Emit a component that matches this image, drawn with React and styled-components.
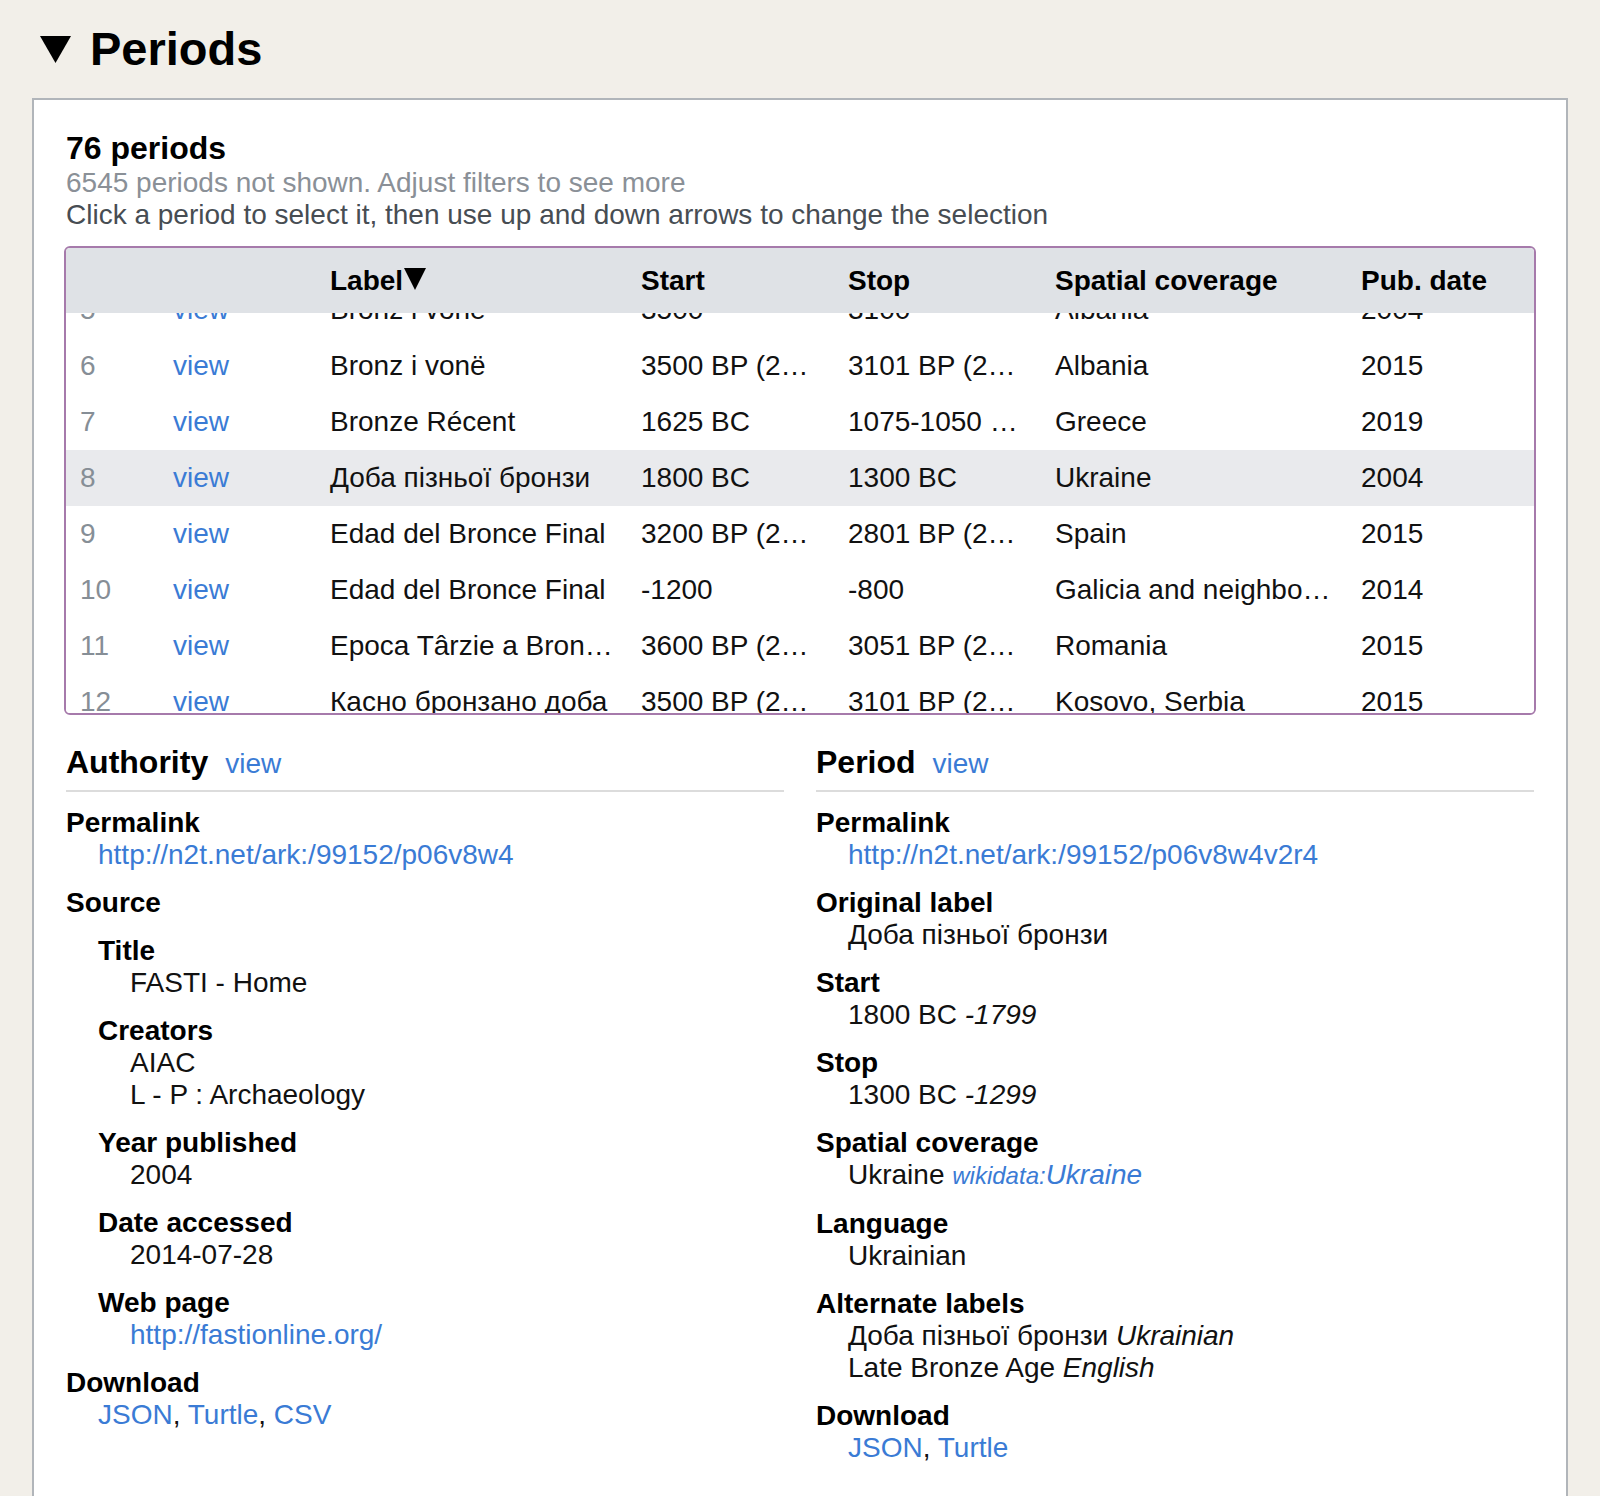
import React, { useLayoutEffect, useRef } from 'react';
import styled, { createGlobalStyle } from 'styled-components';

const GlobalStyle = createGlobalStyle`
  html, body { margin: 0; padding: 0; background: #f2efe9; }
  body {
    font-family: "Liberation Sans", Arial, "Noto Sans CJK SC", sans-serif;
    color: #111;
  }
  * { box-sizing: border-box; }
`;

const Page = styled.div`
  padding: 22px 32px 0;
`;

const TitleRow = styled.div`
  display: flex;
  align-items: center;
  gap: 19px;
  padding-left: 8px;
  height: 54px;
`;

const Title = styled.h2`
  margin: 0;
  font-size: 47px;
  line-height: 54px;
  font-weight: 700;
  color: #000;
`;

const Panel = styled.section`
  margin-top: 22px;
  background: #fff;
  border: 2px solid #b1b5ba;
  border-bottom: none;
  padding: 30px 32px 90px 32px;
`;

const CountHeading = styled.h3`
  margin: 0;
  font-size: 32px;
  line-height: 37px;
  font-weight: 700;
  color: #000;
`;

const Note = styled.p`
  margin: 0;
  font-size: 28px;
  line-height: 32px;
  color: ${(p) => (p.$muted ? '#8a9097' : '#474d53')};
`;

const TableBox = styled.div`
  margin: 15px -2px 0 -2px;
  height: 469px;
  border: 2px solid #a67aab;
  border-radius: 6px;
  overflow-y: auto;
  scrollbar-width: none;
  &::-webkit-scrollbar { display: none; }
`;

const Row = styled.div`
  display: grid;
  grid-template-columns: 93px 157px 311px 207px 207px 306px 1fr;
  align-items: center;
  height: 56px;
  font-size: 28px;
  line-height: 32px;
  background: ${(p) => (p.$selected ? '#e9eaed' : '#fff')};
  cursor: pointer;
`;

const HeadRow = styled(Row)`
  position: sticky;
  top: 0;
  z-index: 1;
  height: 65px;
  background: #dfe2e6;
  font-weight: 700;
  color: #000;
  cursor: default;
`;

const Cell = styled.div`
  padding: 0 ${(p) => (p.$tight ? 6 : 14)}px 0 14px;
  white-space: nowrap;
  overflow: hidden;
  text-overflow: ellipsis;
  color: ${(p) => (p.$muted ? '#868e96' : 'inherit')};
`;

const SortMark = styled.svg`
  display: inline-block;
  vertical-align: baseline;
  width: 24px;
  height: 22px;
`;

const Link = styled.a`
  color: #3a7bd5;
  text-decoration: none;
  font-style: ${(p) => (p.$italic ? 'italic' : 'normal')};
`;

const Small = styled.span`
  font-size: 24px;
`;

const Details = styled.div`
  margin-top: 29px;
  display: grid;
  grid-template-columns: 1fr 1fr;
  gap: 32px;
  align-items: start;
`;

const DetailHead = styled.div`
  display: flex;
  align-items: baseline;
  gap: 17px;
  padding-bottom: 9px;
  border-bottom: 2px solid #dcdcdc;
`;

const DetailTitle = styled.h3`
  margin: 0;
  font-size: 32px;
  line-height: 37px;
  font-weight: 700;
  color: #000;
`;

const HeadLink = styled(Link)`
  font-size: 28px;
  line-height: 32px;
`;

const DL = styled.dl`
  margin: ${(p) => (p.$nested ? '16px 0 0' : '15px 0 0')};
  font-size: 28px;
  line-height: 32px;
  color: #111;
`;

const DT = styled.dt`
  font-weight: 700;
  color: #000;
`;

const DD = styled.dd`
  margin: 0 0 16px 32px;
`;

const Line = styled.div``;

const Em = styled.i`
  font-style: italic;
`;

const rows = [
  { n: 5, label: 'Bronz i vonë', start: '3500', stop: '3100', place: 'Albania', year: '2004' },
  { n: 6, label: 'Bronz i vonë', start: '3500 BP (2015)', stop: '3101 BP (2015)', place: 'Albania', year: '2015' },
  { n: 7, label: 'Bronze Récent', start: '1625 BC', stop: '1075-1050 BC', place: 'Greece', year: '2019' },
  { n: 8, label: 'Доба пізньої бронзи', start: '1800 BC', stop: '1300 BC', place: 'Ukraine', year: '2004', selected: true },
  { n: 9, label: 'Edad del Bronce Final', start: '3200 BP (2015)', stop: '2801 BP (2015)', place: 'Spain', year: '2015' },
  { n: 10, label: 'Edad del Bronce Final', start: '-1200', stop: '-800', place: 'Galicia and neighbouring areas', year: '2014' },
  { n: 11, label: 'Epoca Târzie a Bronzului', start: '3600 BP (2015)', stop: '3051 BP (2015)', place: 'Romania', year: '2015' },
  { n: 12, label: 'Касно бронзано доба', start: '3500 BP (2015)', stop: '3101 BP (2015)', place: 'Kosovo, Serbia', year: '2015' },
];

function Disclosure() {
  return (
    <svg width="31" height="27" viewBox="0 0 31 27" aria-hidden="true">
      <polygon points="0,0 31,0 15.5,27" fill="#000" />
    </svg>
  );
}

function PeriodTable() {
  const ref = useRef(null);
  useLayoutEffect(() => {
    if (ref.current) ref.current.scrollTop = 31;
  }, []);
  return (
    <TableBox ref={ref}>
      <HeadRow>
        <Cell />
        <Cell />
        <Cell $tight>
          Label
          <SortMark viewBox="0 0 24 22" aria-hidden="true">
            <polygon points="1,0 23,0 12,22" fill="#000" />
          </SortMark>
        </Cell>
        <Cell>Start</Cell>
        <Cell>Stop</Cell>
        <Cell>Spatial coverage</Cell>
        <Cell>Pub. date</Cell>
      </HeadRow>
      {rows.map((r) => (
        <Row key={r.n} $selected={r.selected}>
          <Cell $muted>{r.n}</Cell>
          <Cell><Link href="#">view</Link></Cell>
          <Cell $tight>{r.label}</Cell>
          <Cell>{r.start}</Cell>
          <Cell>{r.stop}</Cell>
          <Cell>{r.place}</Cell>
          <Cell>{r.year}</Cell>
        </Row>
      ))}
    </TableBox>
  );
}

export default function App() {
  return (
    <>
      <GlobalStyle />
      <Page>
        <TitleRow>
          <Disclosure />
          <Title>Periods</Title>
        </TitleRow>
        <Panel>
          <CountHeading>76 periods</CountHeading>
          <Note $muted>6545 periods not shown. Adjust filters to see more</Note>
          <Note>Click a period to select it, then use up and down arrows to change the selection</Note>
          <PeriodTable />
          <Details>
            <div>
              <DetailHead>
                <DetailTitle>Authority</DetailTitle>
                <HeadLink href="#">view</HeadLink>
              </DetailHead>
              <DL>
                <DT>Permalink</DT>
                <DD><Link href="#">http://n2t.net/ark:/99152/p06v8w4</Link></DD>
                <DT>Source</DT>
                <DD>
                  <DL $nested>
                    <DT>Title</DT>
                    <DD>FASTI - Home</DD>
                    <DT>Creators</DT>
                    <DD>
                      <Line>AIAC</Line>
                      <Line>L - P : Archaeology</Line>
                    </DD>
                    <DT>Year published</DT>
                    <DD>2004</DD>
                    <DT>Date accessed</DT>
                    <DD>2014-07-28</DD>
                    <DT>Web page</DT>
                    <DD><Link href="#">http://fastionline.org/</Link></DD>
                  </DL>
                </DD>
                <DT>Download</DT>
                <DD>
                  <Link href="#">JSON</Link>, <Link href="#">Turtle</Link>, <Link href="#">CSV</Link>
                </DD>
              </DL>
            </div>
            <div>
              <DetailHead>
                <DetailTitle>Period</DetailTitle>
                <HeadLink href="#">view</HeadLink>
              </DetailHead>
              <DL>
                <DT>Permalink</DT>
                <DD><Link href="#">http://n2t.net/ark:/99152/p06v8w4v2r4</Link></DD>
                <DT>Original label</DT>
                <DD>Доба пізньої бронзи</DD>
                <DT>Start</DT>
                <DD>1800 BC <Em>-1799</Em></DD>
                <DT>Stop</DT>
                <DD>1300 BC <Em>-1299</Em></DD>
                <DT>Spatial coverage</DT>
                <DD>
                  Ukraine <Link href="#" $italic><Small>wikidata:</Small>Ukraine</Link>
                </DD>
                <DT>Language</DT>
                <DD>Ukrainian</DD>
                <DT>Alternate labels</DT>
                <DD>
                  <Line>Доба пізньої бронзи <Em>Ukrainian</Em></Line>
                  <Line>Late Bronze Age <Em>English</Em></Line>
                </DD>
                <DT>Download</DT>
                <DD>
                  <Link href="#">JSON</Link>, <Link href="#">Turtle</Link>
                </DD>
              </DL>
            </div>
          </Details>
        </Panel>
      </Page>
    </>
  );
}
